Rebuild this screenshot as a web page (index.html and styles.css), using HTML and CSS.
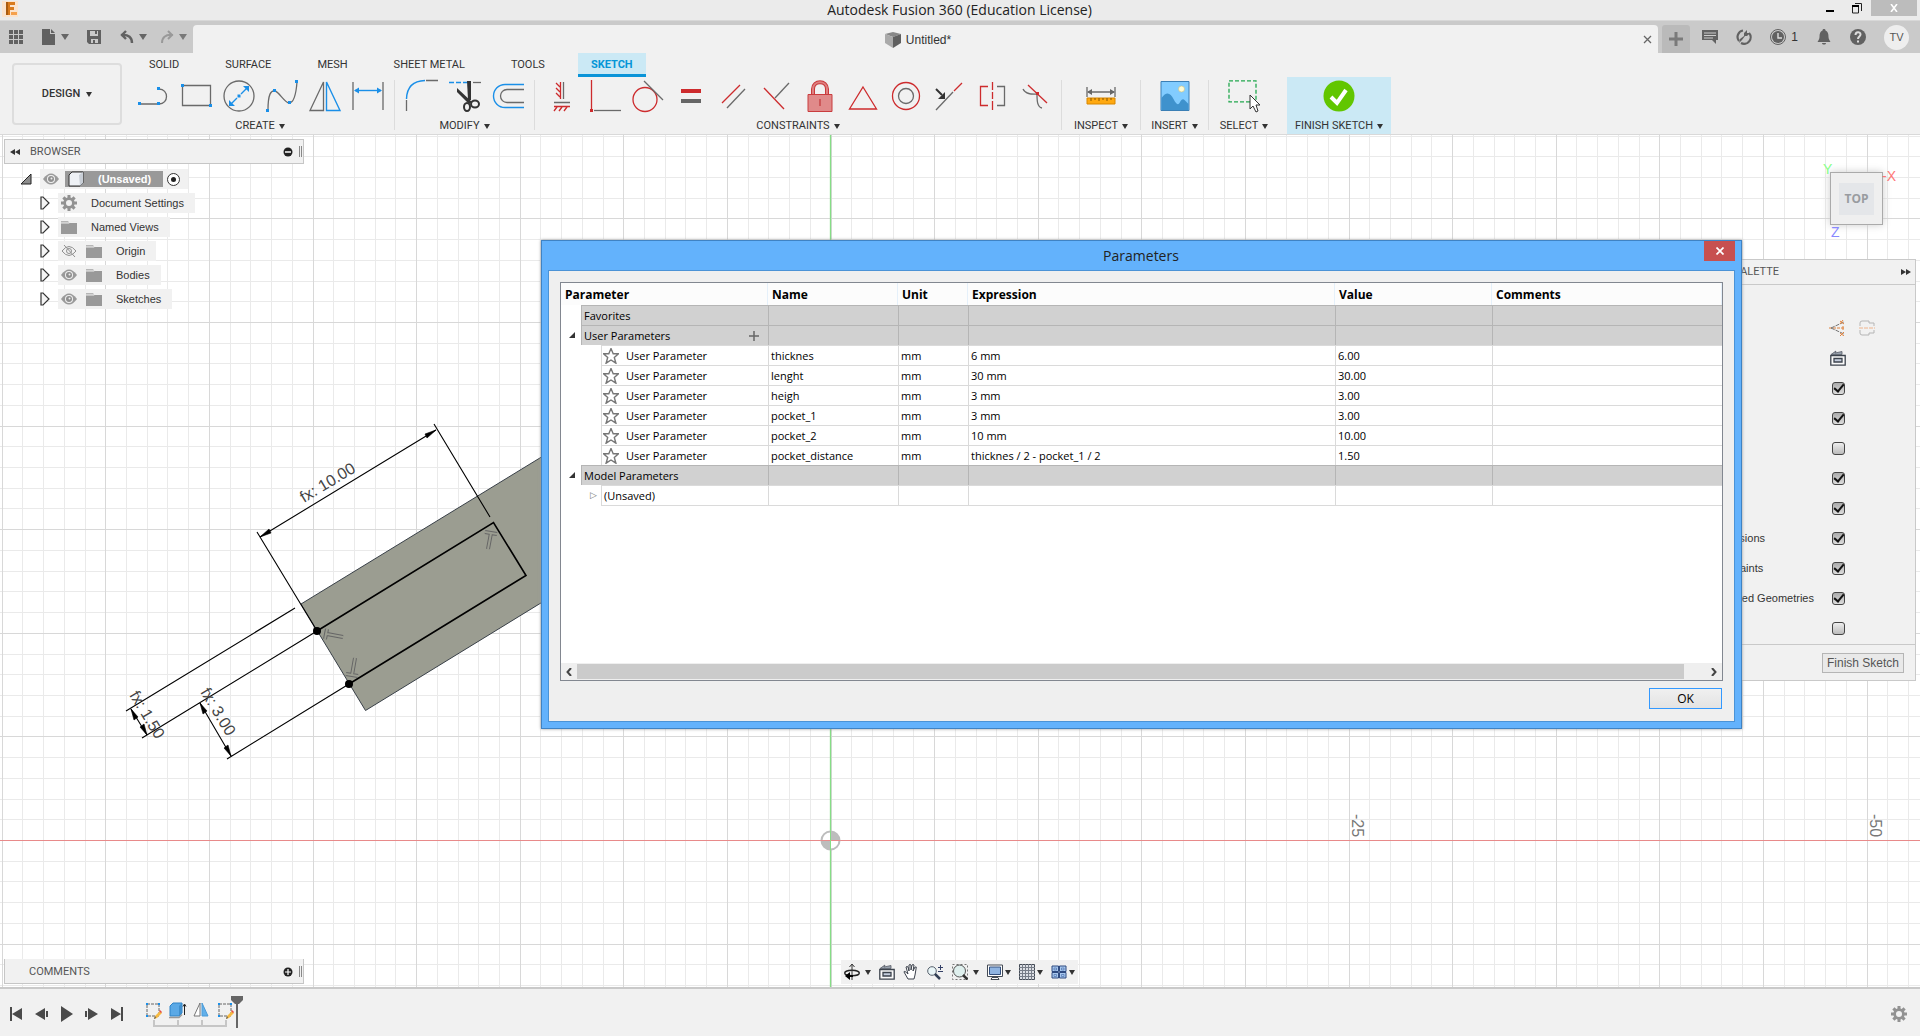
FILE: index.html
```html
<!DOCTYPE html>
<html lang="en">
<head>
<meta charset="utf-8">
<title>Autodesk Fusion 360 (Education License)</title>
<link rel="stylesheet" href="styles.css">
</head>
<body>
<svg class="defs" aria-hidden="true">
  <symbol id="eye" viewBox="0 0 16 12"><path d="M0 6Q8-5 16 6Q8 17 0 6Z" fill="#9a9a9a"/><circle cx="8" cy="6" r="4" fill="#f1f1f1"/><circle cx="8" cy="6" r="3" fill="#8f8f8f"/><circle cx="8.500" cy="5.500" r="1" fill="#eee"/></symbol>
  <symbol id="eye-off" viewBox="0 0 16 12"><path d="M1 6Q8-3 15 6Q8 15 1 6Z" fill="none" stroke="#8f8f8f"/><circle cx="8" cy="6" r="2.500" fill="none" stroke="#8f8f8f"/><path d="M3 0L14 12" stroke="#8f8f8f"/></symbol>
  <symbol id="folder" viewBox="0 0 16 14"><path d="M0 3h16v11H0z" fill="#999"/><path d="M0 1h7l1.500 2H0z" fill="#b5b5b5"/><path d="M0 3h8l2-1.500h6" fill="none" stroke="#eee"/></symbol>
  <symbol id="gear" viewBox="0 0 16 16"><path d="M6.500 0h3v2.400l1.200.5L12.500 1.300l2.200 2.200-1.700 1.800.5 1.200H16v3h-2.500l-.5 1.200 1.700 1.800-2.200 2.200-1.800-1.700-1.200.5V16h-3v-2.500l-1.200-.5-1.800 1.700-2.200-2.200L3 10.700l-.5-1.200H0v-3h2.500L3 5.300 1.300 3.500l2.200-2.200 1.800 1.600 1.200-.5zM8 5a3 3 0 1 0 0 6 3 3 0 0 0 0-6z" fill="#929292" fill-rule="evenodd"/></symbol>
  <symbol id="expand" viewBox="0 0 10 14"><path d="M1 1h2l6 6-6 6H1z" fill="#f4f4f4" stroke="#333" stroke-width="1.200"/></symbol>
  <symbol id="star" viewBox="0 0 16 16"><path d="M8 0.500l2.200 5.200h5.300l-4.200 3.800 1.600 5.700L8 12l-4.900 3.200 1.600-5.700L.5 5.700h5.300z" fill="#fff" stroke="#777" stroke-width="1.400"/></symbol>
  <symbol id="sketch" viewBox="0 0 18 18"><path d="M2 2h12v12H2z" fill="none" stroke="#666" stroke-dasharray="3 1"/><path d="M1 1h2v2H1zM13 1h2v2h-2zM1 13h2v2H1z" fill="#1a8fe8"/><path d="M9 17l1-3 5-5 2 2-5 5z" fill="#f5b942"/><path d="M14 9l1-1 2 2-1 1z" fill="#e34a4a"/><path d="M9 17l1-3 1 2z" fill="#555"/></symbol>
  <symbol id="camera" viewBox="0 0 16 16"><path d="M.8 5.500h14.400v9.700H.8z" fill="#fafafa" stroke="#3c434d" stroke-width="1.300"/><path d="M4 8.500h8v3.500H4z" fill="#c5cede" stroke="#3c434d" stroke-width="1.300"/><path d="M1 4.500L6 1 5 3l7-1.500v3z" fill="#98a1ad" stroke="#555b66" stroke-width=".8"/></symbol>
</svg>

<header class="titlebar">
  <svg class="appicon" width="16" height="16" viewBox="0 0 16 16"><path d="M0 0h16v16H0z" fill="#fbe3cd"/><path d="M4 1h9v3H8v2h4v3H8v5H4z" fill="#d97a1c"/><path d="M4 1h2v13H4z" fill="#a85b12"/><path d="M9 11h6v3H9z" fill="#f5a14d"/></svg>
  <h1>Autodesk Fusion 360 (Education License)</h1>
  <div class="winbuttons">
    <button aria-label="Minimize"><svg width="10" height="14" viewBox="0 0 10 14"><path d="M1 9h8v2H1z"/></svg></button>
    <button aria-label="Restore"><svg width="12" height="12" viewBox="0 0 12 12"><path d="M1.500 4h6v7h-6zM4 1.500h6.500V9" fill="none" stroke="#222"/><path d="M1 3h7v2H1z"/></svg></button>
    <button class="winclose" aria-label="Close"><svg width="8" height="8" viewBox="0 0 8 8"><path d="M1 0l6 8M7 0L1 8" stroke="#fff" stroke-width="1.600"/></svg></button>
  </div>
</header>

<div class="tabbar">
  <div class="quick">
    <button aria-label="Data panel"><svg width="14" height="14" viewBox="0 0 14 14"><path d="M0 0h4v4H0zM5 0h4v4H5zM10 0h4v4h-4zM0 5h4v4H0zM5 5h4v4H5zM10 5h4v4h-4zM0 10h4v4H0zM5 10h4v4H5zM10 10h4v4h-4z"/></svg></button>
    <button class="q-file" aria-label="File"><svg width="14" height="16" viewBox="0 0 14 16"><path d="M0 0h8v5h5v11H0zM9 0l4 4H9z"/></svg><i class="caret"></i></button>
    <button class="q-save" aria-label="Save"><svg width="14" height="14" viewBox="0 0 14 14"><path d="M0 0h14v14H2l-2-2zM3 1v5h8V1zm1 8v4h2v-3h2v3h3V9z" fill-rule="evenodd"/><path d="M8 1h2v3H8z"/></svg></button>
    <button class="q-undo" aria-label="Undo"><svg width="14" height="14" viewBox="0 0 14 14"><path d="M6 1L2 5l4 4M1 5c8-1 11 3 11 8" fill="none" stroke="#616161" stroke-width="2.400"/></svg><i class="caret"></i></button>
    <button class="q-redo" aria-label="Redo"><svg width="14" height="14" viewBox="0 0 14 14"><path d="M8 1l4 4-4 4M13 5C5 4 2 8 2 13" fill="none" stroke="#8e8e8e" stroke-width="2"/></svg><i class="caret"></i></button>
  </div>
  <div class="doctab">
    <div class="docname"><svg width="16" height="16" viewBox="0 0 16 16"><path d="M0 2l8-2 8 2-8 3z" fill="#888"/><path d="M0 2l8 3v11l-8-5z" fill="#aaa"/><path d="M8 5l8-3v9l-8 5z" fill="#5f5f5f"/></svg><span>Untitled*</span></div>
    <button aria-label="Close tab"><svg width="9" height="9" viewBox="0 0 9 9"><path d="M1 1l7 7M8 1L1 8" stroke="#666" stroke-width="1.300"/></svg></button>
  </div>
  <button class="newtab" aria-label="New tab"><svg width="14" height="14" viewBox="0 0 14 14"><path d="M5.500 0h3v5.500H14v3H8.500V14h-3V8.500H0v-3h5.500z" fill="#7a7a7a"/></svg></button>
  <div class="account">
    <button aria-label="Comments"><svg width="16" height="16" viewBox="0 0 16 16"><path d="M0 1h16v10h-2v4l-4-4H0z"/><path d="M2 4h12M2 6.500h12M2 9h9" stroke="#ccc"/></svg></button>
    <button aria-label="Extensions"><svg width="16" height="16" viewBox="0 0 16 16"><path d="M7 1.500a6.500 6.500 0 0 0-4 10.500M13 4a6.500 6.500 0 0 1-8 10" fill="none" stroke="#616161" stroke-width="2.200"/><path d="M3 14l1-4 4-3V4l3-3v3h3l-3 3H9l-3 4z"/></svg></button>
    <button class="jobs" aria-label="Job status"><svg width="16" height="16" viewBox="0 0 16 16"><circle cx="8" cy="8" r="7.500" fill="none" stroke="#616161"/><circle cx="8" cy="8" r="6"/><path d="M8 4v5h4" stroke="#ddd" stroke-width="1.400" fill="none"/></svg><span>1</span></button>
    <button aria-label="Notifications"><svg width="16" height="16" viewBox="0 0 16 16"><path d="M8 0c1 0 1.500.5 1.500 1.500C12 2.500 12.500 5 12.500 8c0 2 1 3 2 5h-13c1-2 2-3 2-5 0-3 .5-5.500 3-6.500C6.500.5 7 0 8 0zM6 14h4c0 2-4 2-4 0z"/></svg></button>
    <button aria-label="Help"><svg width="16" height="16" viewBox="0 0 16 16"><circle cx="8" cy="8" r="8"/><path d="M5.500 6c0-3.500 5-3.500 5-.5C10.500 7.500 8 7.500 8 10M8 11.500v2" fill="none" stroke="#ddd" stroke-width="2"/></svg></button>
    <button class="avatar">TV</button>
  </div>
</div>

<div class="toolbar">
  <button class="design">DESIGN<i class="caret"></i></button>
  <div class="ribbon">
    <nav class="tabs">
      <a href="#">SOLID</a><a href="#">SURFACE</a><a href="#">MESH</a><a href="#">SHEET METAL</a><a href="#">TOOLS</a><a href="#" class="active">SKETCH</a>
    </nav>
    <div class="groups">
      <section class="group">
        <div class="icons">
          <button aria-label="Line"><svg viewBox="0 0 32 32"><path d="M3 24h18M22 9c10 0 10 15 0 15" class="k"/><path d="M1 22h3v3H1zM20 22h3v3h-3zM20 7h3v3h-3z" class="bf"/></svg></button>
          <button aria-label="Rectangle"><svg viewBox="0 0 32 32"><path d="M2.500 5.500h28v20h-28z" class="k"/><path d="M1 4h3v3H1zM29 24h3v3h-3z" class="bf"/></svg></button>
          <button aria-label="Circle"><svg viewBox="0 0 32 32"><circle cx="16" cy="16" r="15" class="k"/><path d="M8 24l6-6M18 14l6-6" class="b"/><path d="M6 26v-6l6 6zM26 6h-6l6 6zM14.500 14.500h3v3h-3z" class="bf"/></svg></button>
          <button aria-label="Spline"><svg viewBox="0 0 32 32"><path d="M2 30C2 14 5 10 9 11s10 12 14 12 7-8 8-21" class="k"/><path d="M0 29h3v3H0zM7 9h3v3H7zM22 21h3v3h-3zM29 0h3v3h-3z" class="bf"/></svg></button>
          <button aria-label="Mirror"><svg viewBox="0 0 32 32"><path d="M14.500 2v28.500H1z" class="k"/><path d="M17.500 2v28.500H31z" class="b"/></svg></button>
          <button aria-label="Sketch dimension"><svg viewBox="0 0 32 32"><path d="M1 2v28M31 2v28" class="k"/><path d="M3 10.500h26" class="b"/><path d="M2 10.500l5-3v6zM30 10.500l-5-3v6z" class="bf"/></svg></button>
        </div>
        <button class="label">CREATE<i class="caret"></i></button>
      </section>
      <section class="group">
        <div class="icons">
          <button aria-label="Fillet"><svg viewBox="0 0 32 32"><path d="M.5 31V20M20 .5h12" class="k"/><path d="M.5 19Q1 1 19 .5" class="b"/></svg></button>
          <button aria-label="Trim"><svg viewBox="0 0 32 32"><path d="M0 2.500h20" class="b" stroke-dasharray="5 2"/><path d="M24 2.500h8" class="k"/><path d="M18 1l4 0v19h-3z" fill="#333"/><path d="M8 8l15 14-3 2L8 12z" fill="#333"/><ellipse cx="18" cy="27" rx="3" ry="4" fill="none" stroke="#333" stroke-width="2"/><ellipse cx="26" cy="24" rx="4" ry="3.500" fill="none" stroke="#333" stroke-width="2"/></svg></button>
          <button aria-label="Offset"><svg viewBox="0 0 32 32"><path d="M32 4.500H13a11.500 11.500 0 0 0 0 23h19" class="b"/><path d="M32 9.500H15a6.500 6.500 0 0 0 0 13h17" class="k"/></svg></button>
        </div>
        <button class="label">MODIFY<i class="caret"></i></button>
      </section>
      <section class="group">
        <div class="icons">
          <button aria-label="Horizontal/Vertical"><svg viewBox="0 0 32 32"><path d="M14.500 2v17M10 3l4 4M10 8l4 4M10 13l4 4M8 26.500h16M11 27l-3 4M16 27l-3 4M21 27l-3 4" class="r"/><path d="M17.500 2v17M8 22.500h16" class="k"/></svg></button>
          <button aria-label="Coincident"><svg viewBox="0 0 32 32"><path d="M2.500 0v29" class="r"/><path d="M5 30.500h27" class="k"/><path d="M1 29h3v3H1z" class="rf"/></svg></button>
          <button aria-label="Tangent"><svg viewBox="0 0 32 32"><circle cx="13" cy="19.500" r="12" class="r"/><path d="M12 1l19 19" class="k"/></svg></button>
          <button aria-label="Equal"><svg viewBox="0 0 32 32"><path d="M6 9h20v4H6z" class="rf"/><path d="M6 19h20v4H6z" fill="#666"/></svg></button>
          <button aria-label="Parallel"><svg viewBox="0 0 32 32"><path d="M4 23L22 5" class="r"/><path d="M9 28L27 9" class="k"/></svg></button>
          <button aria-label="Perpendicular"><svg viewBox="0 0 32 32"><path d="M3 8l20 21" class="r"/><path d="M14 18L28 3" class="k"/></svg></button>
          <button aria-label="Fix"><svg viewBox="0 0 32 32"><path d="M9 14V9c0-9 14-9 14 0v5" fill="none" stroke="#c8393b" stroke-width="4"/><path d="M9 14V9c0-9 14-9 14 0v5" fill="none" stroke="#df8080" stroke-width="2"/><path d="M4 14.500h24v17H4z" fill="#e08a8a" stroke="#c93c3e"/><path d="M16 19v7" stroke="#bb2528"/></svg></button>
          <button aria-label="Equal size"><svg viewBox="0 0 32 32"><path d="M16 7l13.500 22h-27z" class="r"/></svg></button>
          <button aria-label="Concentric"><svg viewBox="0 0 32 32"><circle cx="16" cy="16" r="13.500" class="r"/><circle cx="16" cy="16" r="7.500" class="k"/></svg></button>
          <button aria-label="Midpoint"><svg viewBox="0 0 32 32"><path d="M3 30l17-18" class="k"/><path d="M21 11L29 3" class="r"/><path d="M3 9l6 6" stroke="#333" stroke-width="2"/><path d="M12 12v7H5z" fill="#333"/></svg></button>
          <button aria-label="Symmetry"><svg viewBox="0 0 32 32"><path d="M12 6.500H4.500v19H12M16.500 2v28" class="r"/><path d="M21 6.500h7.500v19H21" class="k"/><path d="M15 10h3v2h-3zM15 19h3v2h-3z" fill="#f1f1f1"/></svg></button>
          <button aria-label="Curvature"><svg viewBox="0 0 32 32"><path d="M9 5l19 18" class="r"/><path d="M4 9c3 6 10 5 14 5 0 6 0 13 5 14" class="k"/><path d="M17 12h3v3h-3z" class="rf"/></svg></button>
        </div>
        <button class="label">CONSTRAINTS<i class="caret"></i></button>
      </section>
      <section class="group g-inspect">
        <div class="icons"><button aria-label="Measure"><svg viewBox="0 0 32 32"><path d="M2 7v10M30 7v10M3 12h26" class="k"/><path d="M2 12l5-3v6zM30 12l-5-3v6z" fill="#666"/><path d="M2 18h28v6H2z" fill="#ffa910" stroke="#d88700"/><path d="M6 18v3M10 18v2M14 18v3M18 18v2M22 18v3M26 18v2" stroke="#865400"/></svg></button></div>
        <button class="label">INSPECT<i class="caret"></i></button>
      </section>
      <section class="group g-insert">
        <div class="icons"><button aria-label="Insert image"><svg viewBox="0 0 32 32"><path d="M2 1.500h28v29H2z" fill="#82ccff" stroke="#3b7fb5"/><circle cx="22.500" cy="9" r="3" fill="#fdfbd5" stroke="#cdbf7a" stroke-width=".6"/><path d="M2.500 18c5-7 9-5 12 1s5 6 6 4 3-5 5-3l4 4v6h-27z" fill="#3f92cd"/></svg></button></div>
        <button class="label">INSERT<i class="caret"></i></button>
      </section>
      <section class="group g-select">
        <div class="icons"><button aria-label="Select"><svg viewBox="0 0 32 32"><path d="M1 .8h27v21H1z" fill="none" stroke="#23a84f" stroke-width="1.300" stroke-dasharray="4 2"/><path d="M22 15v14l3-3 3 6 2-1-2-6h4z" fill="#fff" stroke="#333"/></svg></button></div>
        <button class="label">SELECT<i class="caret"></i></button>
      </section>
      <section class="group finish">
        <div class="icons"><button aria-label="Finish sketch"><svg viewBox="0 0 32 32"><circle cx="16" cy="16" r="15.500" fill="#61c600"/><path d="M8 17l6 6 9-13" fill="none" stroke="#fff" stroke-width="4"/></svg></button></div>
        <button class="label">FINISH SKETCH<i class="caret"></i></button>
      </section>
    </div>
  </div>
</div>

<main class="canvas">
  <svg class="scene">
    <path id="minor" fill="none" stroke="#eaeaea"/>
    <path id="major" fill="none" stroke="#d8d8d8"/>
    <path d="M0 705.500h4000" stroke="#e88a8a"/>
    <path d="M830.500 0v2000" stroke="#86dd86" stroke-width="1.300"/>
    <g transform="translate(830.500 705.500)"><circle r="9" fill="#fff" stroke="#bdbdbd" stroke-width="2"/><path d="M0 0V-9A9 9 0 0 1 9 0zM0 0V9A9 9 0 0 1-9 0z" fill="#bdbdbd"/><path d="M-10 0h20" stroke="#e88a8a"/><path d="M0-10v20" stroke="#86dd86"/></g>
    <g class="ruler"><text transform="translate(1352 679) rotate(90)">-25</text><text transform="translate(1870 679) rotate(90)">-50</text></g>
    <g transform="translate(0 -135)">
      <path class="body" d="M301 604L620 409V554.500L365.500 710.500z"/>
      <path d="M317 631L493.500 522.500 526 575.500 349 684" fill="none" stroke="#000" stroke-width="1.600"/>
      <circle cx="317" cy="631" r="4"/><circle cx="349" cy="684" r="4"/>
      <path class="dim" d="M260 537L436 430M257 532L317 631M434 424L490 517M295 608L126 711M317 631L142 738M349 684L227 759M131 709L147 735M200 703L231 756"/>
      <path d="M260 537l9-8 2 4zM436 430l-9 8-2-4zM131 709l7 8-4 3zM147 735l-7-8 4-3zM200 703l7 8-4 3zM231 756l-7-8 4-3z" stroke="#000" stroke-width=".6"/>
      <path class="glyph-out" d="M485 532l12 2M491 533l-3 16M327 629l-2 10M327 634l16 3M346 674l12 2M355 658l-3 17"/>
      <path class="glyph-in" d="M485 532l12 2M491 533l-3 16M327 629l-2 10M327 634l16 3M346 674l12 2M355 658l-3 17"/>
      <g class="dimtext"><text transform="translate(304 503) rotate(-31)">fx: 10.00</text><text transform="translate(129 695) rotate(59)">fx: 1.50</text><text transform="translate(200 692) rotate(59)">fx: 3.00</text></g>
    </g>
  </svg>

  <aside class="browser">
    <div class="panelhead"><svg width="10" height="6" viewBox="0 0 10 6"><path d="M5 0v6L0 3zM10 0v6L5 3z" fill="#333"/></svg><span>BROWSER</span><svg class="dot" width="10" height="10" viewBox="0 0 10 10"><circle cx="5" cy="5" r="4.500" fill="#222"/><path d="M2 5h6" stroke="#fff" stroke-width="1.500"/></svg><i class="grip"></i></div>
    <ul class="tree">
      <li class="root"><svg width="12" height="12" viewBox="0 0 12 12"><path d="M11 1v10H1z" fill="#8d8d8d" stroke="#222"/></svg><div class="node"><svg width="16" height="12"><use href="#eye"/></svg><div class="docsel"><svg width="16" height="16" viewBox="0 0 16 16"><path d="M1 4l3-3h11v11l-3 3H1z" fill="#eef1f5" stroke="#333"/><path d="M11 4l4-3v11l-3 3z" fill="#c8ced6"/></svg><b>(Unsaved)</b></div><svg width="13" height="13" viewBox="0 0 13 13"><circle cx="6.500" cy="6.500" r="6" fill="#fff" stroke="#333"/><circle cx="6.500" cy="6.500" r="2.500" fill="#222"/></svg></div></li>
      <li><svg width="10" height="14"><use href="#expand"/></svg><div class="node"><svg width="16" height="16"><use href="#gear"/></svg><span>Document Settings</span></div></li>
      <li><svg width="10" height="14"><use href="#expand"/></svg><div class="node"><svg width="16" height="14"><use href="#folder"/></svg><span>Named Views</span></div></li>
      <li><svg width="10" height="14"><use href="#expand"/></svg><div class="node"><svg width="16" height="12"><use href="#eye-off"/></svg><svg width="16" height="14"><use href="#folder"/></svg><span>Origin</span></div></li>
      <li><svg width="10" height="14"><use href="#expand"/></svg><div class="node"><svg width="16" height="12"><use href="#eye"/></svg><svg width="16" height="14"><use href="#folder"/></svg><span>Bodies</span></div></li>
      <li><svg width="10" height="14"><use href="#expand"/></svg><div class="node"><svg width="16" height="12"><use href="#eye"/></svg><svg width="16" height="14"><use href="#folder"/></svg><span>Sketches</span></div></li>
    </ul>
  </aside>

  <div class="comments panelhead"><span>COMMENTS</span><svg class="dot" width="10" height="10" viewBox="0 0 10 10"><circle cx="5" cy="5" r="4.500" fill="#222"/><path d="M2 5h6M5 2v6" stroke="#fff" stroke-width="1.200"/></svg><i class="grip"></i></div>

  <div class="viewcube"><b class="ax-y">Y</b><b class="ax-x">-X</b><b class="ax-z">Z</b><div class="face"><span>TOP</span></div></div>

  <aside class="palette">
    <div class="palhead"><span>SKETCH PALETTE</span><svg width="10" height="6" viewBox="0 0 10 6"><path d="M0 0v6l5-3zM5 0v6l5-3z" fill="#333"/></svg></div>
    <div class="options">
      <div class="opt">Options</div>
      <div class="opt">Linetype<span class="pair"><svg width="16" height="16" viewBox="0 0 16 16"><path d="M0 8h16" stroke="#e0823c" stroke-dasharray="3 1"/><path d="M2 8l13-6M2 8l13 6" stroke="#777" stroke-dasharray="4 1"/><path d="M11 1l4 3M14 0l-3 4M11 13l4 3M15 12l-4 4M14 6v4" stroke="#e0823c"/></svg><svg width="16" height="16" viewBox="0 0 16 16"><path d="M1 6V3q0-2 2-2h7v2h5v3M1 10v3q0 2 2 2h7v-2h5v-3" fill="none" stroke="#b5b5b5"/><path d="M0 8h16" stroke="#efb48c" stroke-dasharray="4 1"/></svg></span></div>
      <div class="opt">Look At<svg width="16" height="16"><use href="#camera"/></svg></div>
      <label class="opt">Sketch Grid<input type="checkbox" checked></label>
      <label class="opt">Snap<input type="checkbox" checked></label>
      <label class="opt">Slice<input type="checkbox"></label>
      <label class="opt">Show Profile<input type="checkbox" checked></label>
      <label class="opt">Show Points<input type="checkbox" checked></label>
      <label class="opt">Show Dimensions<input type="checkbox" checked></label>
      <label class="opt">Show Constraints<input type="checkbox" checked></label>
      <label class="opt">Show Projected Geometries<input type="checkbox" checked></label>
      <label class="opt">3D Sketch<input type="checkbox"></label>
    </div>
    <div class="palfoot"><button>Finish Sketch</button></div>
  </aside>

  <div class="navbar">
    <button aria-label="Orbit"><svg width="16" height="16" viewBox="0 0 16 16"><ellipse cx="8" cy="9" rx="7.300" ry="2.800" fill="none" stroke="#222" stroke-width="1.400"/><path d="M8 16V1M5.500 3L8 0l2.500 3" fill="none" stroke="#333"/><path d="M1 12l5-4v3h3v2H6v3z"/></svg><i class="caret"></i></button>
    <button aria-label="Look at"><svg width="16" height="16"><use href="#camera"/></svg></button>
    <button aria-label="Pan"><svg width="16" height="16" viewBox="0 0 16 16"><path d="M5 15L1 8q0-2 4 2L3 3q1-1 2 0l1 4V1q1-1 2 0v5l1-5q1-1 2 0l-1 6 2-4q2-1 1 2l-1 6-1 4z" fill="#fff" stroke="#3c424c"/></svg></button>
    <button aria-label="Zoom"><svg width="16" height="16" viewBox="0 0 16 16"><circle cx="5" cy="7" r="4.300" fill="#eaf6f8" stroke="#57606c"/><path d="M8 10l5 5" stroke="#333f55" stroke-width="2.500"/><path d="M13.500 1v5M11 3.500h5M11 7.500h5" stroke="#333f66"/></svg></button>
    <button aria-label="Zoom window"><svg width="16" height="16" viewBox="0 0 16 16"><path d="M.5.500h15v15H.5z" fill="none" stroke="#777" stroke-dasharray="2 2"/><circle cx="7.500" cy="7" r="6" fill="#dff0ee" stroke="#555"/><path d="M11 11l4.500 4.500" stroke="#333" stroke-width="2.500"/></svg><i class="caret"></i></button>
    <button aria-label="Display settings"><svg width="16" height="16" viewBox="0 0 16 16"><path d="M.5 1h15v11.500H.5z" fill="#fff" stroke="#444b55"/><path d="M2.500 3h11v7.500h-11z" fill="#8fb4e2" stroke="#34507e"/><path d="M5 13.500h6l1 2H4z" fill="#fff" stroke="#444b55"/></svg><i class="caret"></i></button>
    <button aria-label="Grid and snaps"><svg width="16" height="16" viewBox="0 0 16 16"><path d="M.5.500h15v15H.5z" fill="#dde0e6" stroke="#444b55"/><path d="M3.500 0v16M6.500 0v16M9.500 0v16M12.500 0v16M0 3.500h16M0 6.500h16M0 9.500h16M0 12.500h16" stroke="#777d88"/></svg><i class="caret"></i></button>
    <button aria-label="Viewports"><svg width="16" height="16" viewBox="0 0 16 16"><path d="M1 2h6.500v5.500H1zM8.500 2H15v5.500H8.500zM1 8.500h6.500V14H1zM8.500 8.500H15V14H8.500z" fill="#a9c8ee" stroke="#2e4a80"/><path d="M3 4h2.500v2H3zM10.500 4H13v2h-2.500zM3 10.500h2.500v2H3zM10.500 10.500H13v2h-2.500z" fill="none" stroke="#4d74b0" stroke-width=".7"/></svg><i class="caret"></i></button>
  </div>

  <section class="dialog" role="dialog" aria-labelledby="dlg">
    <header><h2 id="dlg">Parameters</h2><button aria-label="Close"><svg width="8" height="8" viewBox="0 0 8 8"><path d="M.5.500l7 7M7.500.500l-7 7" stroke="#fff" stroke-width="1.700"/></svg></button></header>
    <div class="client">
      <div class="tablebox">
        <table>
          <colgroup><col class="c1"><col class="c2"><col class="c3"><col class="c4"><col class="c5"><col></colgroup>
          <thead><tr><th>Parameter</th><th>Name</th><th>Unit</th><th>Expression</th><th>Value</th><th>Comments</th></tr></thead>
          <tbody>
            <tr class="sec"><td><div>Favorites</div></td><td></td><td></td><td></td><td></td><td></td></tr>
            <tr class="sec"><td class="open"><div>User Parameters<button aria-label="Add parameter"><svg width="10" height="10" viewBox="0 0 10 10"><path d="M5 0v10M0 5h10" stroke="#666" stroke-width="1.500"/></svg></button></div></td><td></td><td></td><td></td><td></td><td></td></tr>
            <tr><td><div><svg width="16" height="16"><use href="#star"/></svg>User Parameter</div></td><td>thicknes</td><td>mm</td><td>6 mm</td><td>6.00</td><td></td></tr>
            <tr><td><div><svg width="16" height="16"><use href="#star"/></svg>User Parameter</div></td><td>lenght</td><td>mm</td><td>30 mm</td><td>30.00</td><td></td></tr>
            <tr><td><div><svg width="16" height="16"><use href="#star"/></svg>User Parameter</div></td><td>heigh</td><td>mm</td><td>3 mm</td><td>3.00</td><td></td></tr>
            <tr><td><div><svg width="16" height="16"><use href="#star"/></svg>User Parameter</div></td><td>pocket_1</td><td>mm</td><td>3 mm</td><td>3.00</td><td></td></tr>
            <tr><td><div><svg width="16" height="16"><use href="#star"/></svg>User Parameter</div></td><td>pocket_2</td><td>mm</td><td>10 mm</td><td>10.00</td><td></td></tr>
            <tr><td><div><svg width="16" height="16"><use href="#star"/></svg>User Parameter</div></td><td>pocket_distance</td><td>mm</td><td>thicknes / 2 - pocket_1 / 2</td><td>1.50</td><td></td></tr>
            <tr class="sec"><td class="open"><div>Model Parameters</div></td><td></td><td></td><td></td><td></td><td></td></tr>
            <tr class="last"><td class="closed"><div>(Unsaved)</div></td><td></td><td></td><td></td><td></td><td></td></tr>
          </tbody>
        </table>
        <div class="hscroll"><svg width="6" height="8" viewBox="0 0 6 8"><path d="M5 0L1.500 4 5 8" fill="none" stroke="#444" stroke-width="2"/></svg><i></i><svg width="6" height="8" viewBox="0 0 6 8"><path d="M1 0l3.500 4L1 8" fill="none" stroke="#444" stroke-width="2"/></svg></div>
      </div>
      <button class="ok">OK</button>
    </div>
  </section>
</main>

<footer class="timeline">
  <div class="play">
    <button aria-label="Go to start"><svg width="13" height="14" viewBox="0 0 13 14"><path d="M0 0h2v14H0zM12 1v12L2 7z"/></svg></button>
    <button aria-label="Step back"><svg width="13" height="14" viewBox="0 0 13 14"><path d="M10 1v12L0 7zM11 4h2v6h-2z"/></svg></button>
    <button aria-label="Play"><svg width="13" height="16" viewBox="0 0 13 16"><path d="M1 0l12 8-12 8z"/></svg></button>
    <button aria-label="Step forward"><svg width="13" height="14" viewBox="0 0 13 14"><path d="M3 1v12l10-6zM0 4h2v6H0z"/></svg></button>
    <button aria-label="Go to end"><svg width="13" height="14" viewBox="0 0 13 14"><path d="M11 0h2v14h-2zM1 1v12l10-6z"/></svg></button>
  </div>
  <svg class="history" width="100" height="36" viewBox="0 0 100 36">
    <use href="#sketch" width="18" height="18" y="8"/>
    <path d="M25 12l3-3h9v10l-3 3h-9z" fill="#5ba9e6" stroke="#2e83c7"/><path d="M34 12l3-3v10l-3 3z" fill="#3f8fce"/><path d="M24 23.500h10l3-3" fill="none" stroke="#999" stroke-width="1.500"/><path d="M39.500 21V11M38 12.500l1.500-2.500 1.500 2.500" fill="none" stroke="#222"/>
    <path d="M55 9v13h-6z" fill="#fff" stroke="#777"/><path d="M57 9v13h6z" fill="#62b0ea" stroke="#4a9bd8"/>
    <use href="#sketch" width="18" height="18" x="72" y="8"/>
    <path d="M9 26v6h72v-6M33 26v6M57 26v6" fill="none" stroke="#c6c6c6" stroke-width="2"/>
    <path d="M86 2h12v4l-4 4h-1v24h-2V10h-1l-4-4z" fill="#666"/>
  </svg>
  <button class="settings" aria-label="Settings"><svg width="16" height="16"><use href="#gear"/></svg></button>
</footer>
<script src="grid.js"></script>
</body>
</html>
```
FILE: styles.css
```css
* { box-sizing: border-box; }
body { margin: 0; height: 100vh; display: flex; flex-direction: column; overflow: hidden; font: 11px/16px "Liberation Sans", Arial, sans-serif; color: #333; background: #f1f1f1; }
button { margin: 0; padding: 0; border: 0; background: none; font: inherit; color: inherit; display: flex; align-items: center; }
svg { display: block; flex: none; }
h1, h2 { margin: 0; font-weight: 400; font-family: "Open Sans", "Noto Sans", sans-serif; color: #222; }
.defs { position: absolute; width: 0; height: 0; }
.caret { flex: none; border: 3px solid transparent; border-top: 5px solid #333; border-bottom: 0; }

.titlebar { height: 20px; flex: none; background: #ebebeb; display: flex; align-items: flex-start; padding: 0 3px 0 2px; }
.appicon { margin-top: 1px; }
.titlebar h1 { flex: 1; text-align: center; font-size: 14px; line-height: 20px; padding-left: 76px; }
.winbuttons { display: flex; gap: 16px; width: 92px; height: 16px; align-items: center; justify-content: flex-end; }
.winclose { width: 46px; height: 16px; background: #bcbcbc; justify-content: center; }
.winbuttons button:nth-child(2) { margin-right: -8px; }

.tabbar { height: 33px; flex: none; background: #cacaca; border-top: 1px solid #d8d8d8; padding-top: 4px; display: flex; }
.quick { width: 193px; padding: 0 0 4px 9px; display: flex; align-items: center; }
.quick svg, .account svg { fill: #616161; }
.quick .caret { border-width: 4px; border-bottom: 0; border-top: 6px solid #666; margin-left: 5px; }
.q-file { margin-left: 19px; }
.q-save { margin-left: 18px; }
.q-undo { margin-left: 19px; }
.q-redo { margin-left: 13px; opacity: .8; }
.doctab { flex: 1; display: flex; align-items: center; background: #f1f1f1; border-radius: 4px 4px 0 0; padding-right: 6px; }
.docname { flex: 1; display: flex; justify-content: center; align-items: center; gap: 5px; font-size: 12px; padding-top: 1px; }
.newtab { width: 28px; margin-left: 4px; justify-content: center; background: #bababa; border-radius: 3px 3px 0 0; }
.account { width: 230px; padding: 0 11px 4px 12px; display: flex; align-items: center; justify-content: space-between; }
.jobs { gap: 5px; font-size: 12px; }
.avatar { width: 25px; height: 25px; border-radius: 50%; background: #eee; justify-content: center; font-size: 11px; color: #555; }

.toolbar { height: 82px; flex: none; display: flex; border-bottom: 1px solid #d9d9d9; padding-left: 12px; font-family: Roboto, "Liberation Sans", sans-serif; }
.design { width: 110px; height: 62px; margin-top: 10px; border: 2px solid #ddd; border-radius: 4px; justify-content: center; gap: 6px; font-weight: 500; }
.ribbon { flex: 1; padding-left: 9px; }
.tabs { display: flex; gap: 20px; padding-left: 5px; height: 24px; }
.tabs a { padding: 4px 13px; color: #333; text-decoration: none; }
.tabs a.active { background: #cbe9f5; color: #0696d7; font-weight: 700; padding-bottom: 1px; border-bottom: 3px solid #0a94d8; }
.groups { display: flex; height: 57px; }
.group { display: flex; flex-direction: column; align-items: center; position: relative; padding: 0 6px 0 5px; }
.group:first-child { padding-left: 0; }
.group::after { content: ""; position: absolute; right: 0; top: 3px; width: 1px; height: 50px; background: #dcdcdc; }
.icons { display: flex; height: 41px; padding-top: 3px; }
.icons button { width: 43px; height: 32px; justify-content: center; }
.icons svg { width: 32px; height: 32px; overflow: visible; }
.label { gap: 4px; height: 16px; white-space: nowrap; }
.k { fill: none; stroke: #6a6a6a; stroke-width: 1.3; }
.b { fill: none; stroke: #1a8fe8; stroke-width: 1.4; }
.r { fill: none; stroke: #cd2b2d; stroke-width: 1.3; }
.bf { fill: #1a8fe8; }
.rf { fill: #cd2b2d; }
.g-inspect { width: 79px; }
.g-insert { width: 68px; }
.g-select { width: 78px; padding: 0 8px 0 0; }
.g-select::after, .finish::after { display: none; }
.finish { width: 104px; background: #cbe9f5; padding: 0; }

.canvas { flex: 1; position: relative; background: #fff; overflow: hidden; }
.scene { position: absolute; inset: 0; width: 100%; height: 100%; }
.ruler text { font-size: 16px; fill: #777; }
.body { fill: #9b9d91; stroke: #394048; }
.dim { fill: none; stroke: #000; stroke-width: 1.1; }
.dimtext text { font-size: 16px; fill: #444; }
.glyph-out { fill: none; stroke: #666; stroke-width: 4; }
.glyph-in { fill: none; stroke: #9b9d91; stroke-width: 2; }

.panelhead { width: 300px; height: 25px; display: flex; align-items: center; background: #f1f1f1; border: 1px solid #c6c6c6; padding: 0 1px 0 5px; gap: 10px; font: 11px/16px Roboto, "Liberation Sans", sans-serif; color: #555; }
.panelhead .dot { margin-left: auto; }
.grip { width: 3px; height: 11px; border: 1px solid #888; border-width: 0 1px; margin-left: -4px; }
.browser { position: absolute; left: 4px; top: 4px; }
.comments { position: absolute; left: 4px; bottom: 3px; border-top: 0; padding-top: 1px; padding-left: 24px; }
.tree { list-style: none; margin: 5px 0 0; padding: 0; display: flex; flex-direction: column; gap: 4px; }
.tree li { display: flex; align-items: center; gap: 8px; height: 20px; padding-left: 36px; }
.tree .root { padding-left: 16px; }
.node { display: flex; align-items: center; gap: 9px; height: 20px; background: #f1f1f1; padding: 0 11px 0 3px; }
.node span { padding-left: 5px; }
.root .node { padding: 0 8px 0 3px; gap: 6px; }
.root .node > svg:last-child { margin-left: -2px; }
.docsel { display: flex; align-items: center; gap: 14px; height: 16px; width: 98px; padding-left: 3px; background: #999; color: #fff; }

.viewcube { position: absolute; right: 37px; top: 37px; width: 53px; height: 53px; }
.face { height: 53px; border: 1px solid #aaa; background: #efefef; display: flex; align-items: center; justify-content: center; box-shadow: 0 0 8px #ccc; }
.face span { background: #e4e6e9; padding: 8px 5px; font: 700 12px/16px "Open Sans", sans-serif; color: #999ca0; }
.viewcube b { position: absolute; font: 14px/16px "Liberation Sans", sans-serif; }
.ax-y { left: -7px; top: -11px; color: #8f8; }
.ax-x { right: -13px; top: -4px; color: #f77; }
.ax-z { left: 1px; top: 52px; color: #88f; }

.palette { position: absolute; right: 4px; top: 124px; width: 252px; background: #f1f1f1; border: 1px solid #c9c9c9; }
.palhead { height: 25px; display: flex; align-items: center; justify-content: space-between; padding: 0 4px 0 25px; border-bottom: 1px solid #c9c9c9; font-family: Roboto, sans-serif; color: #555; }
.options { padding: 0 0 1px 12px; }
.opt { display: flex; align-items: center; justify-content: space-between; height: 30px; padding-right: 70px; }
.opt:first-child { height: 28px; }
.opt svg { margin-right: -1px; }
.pair { display: flex; gap: 14px; margin-right: -30px; }
.pair svg { margin: 0; }
.opt input { appearance: none; margin: 0; width: 13px; height: 13px; border: 1px solid #444; border-radius: 3px; background: linear-gradient(#eee, #bbb); }
.opt input:checked { background: linear-gradient(#aaa, #ddd); display: grid; place-items: center; }
.opt input:checked::before { content: ""; width: 4px; height: 8px; border: solid #111; border-width: 0 2px 2px 0; transform: rotate(40deg); margin-top: -2px; }
.palfoot { height: 36px; display: flex; align-items: center; justify-content: flex-end; border-top: 1px solid #c9c9c9; padding-right: 11px; }
.palfoot button { width: 82px; height: 20px; border: 1px solid #b5b5b5; background: #e9e9e9; justify-content: center; font-size: 12px; color: #555; }

.navbar { position: absolute; left: 841px; bottom: 3px; width: 237px; height: 24px; background: #f1f1f1; display: flex; align-items: center; justify-content: space-between; padding: 0 3px; }
.navbar button { gap: 5px; }
.navbar button:nth-child(n+6) { gap: 2px; }

.dialog { position: absolute; left: 541px; top: 105px; width: 1201px; background: #63b2fc; border: 1px solid #3f83c4; padding: 0 6px 6px; box-shadow: 0 0 3px #999; font: 11px/16px "Open Sans", "Noto Sans", sans-serif; color: #000; }
.dialog header { height: 29px; display: flex; align-items: flex-start; }
.dialog h2 { flex: 1; text-align: center; font-size: 14px; line-height: 30px; padding-left: 30px; }
.dialog header button { width: 31px; height: 20px; background: #c75050; justify-content: center; }
.client { background: #efefef; border: 1px solid #4b93d6; padding: 11px 11px 12px; display: flex; flex-direction: column; align-items: flex-end; gap: 7px; }
.tablebox { width: 100%; height: 399px; border: 1px solid #828790; background: #fff; display: flex; flex-direction: column; justify-content: space-between; }
table { width: 100%; table-layout: fixed; border-collapse: separate; border-spacing: 0; }
.c1 { width: 207px; }
.c2 { width: 130px; }
.c3 { width: 70px; }
.c4 { width: 367px; }
.c5 { width: 157px; }
th { height: 22px; padding: 2px 4px 0; text-align: left; font-size: 12px; line-height: 16px; font-weight: 700; background: #fcfcfc; border-right: 1px solid #e5f0fa; }
td { height: 20px; padding: 0 0 0 2px; line-height: 18px; border-top: 1px solid #dadada; border-left: 1px solid #dadada; white-space: nowrap; }
td:first-child { border: 0; padding: 0 0 0 40px; }
td:first-child div { height: 20px; border-top: 1px solid #dadada; border-left: 1px solid #dadada; padding-left: 1px; display: flex; align-items: center; gap: 7px; }
.sec td:not(:first-child) { background: #d1d1d1; border-color: #b5b5b5; }
.sec td:first-child { padding-left: 20px; }
.sec td:first-child div { background: #d1d1d1; border-color: #b5b5b5; padding: 0 9px 0 2px; justify-content: space-between; }
.open, .closed { position: relative; }
.open::before { content: ""; position: absolute; left: 8px; top: 7px; border: 3px solid #333; border-left-color: transparent; border-top-color: transparent; }
.closed::before { content: "▷"; position: absolute; left: 29px; font: 9px/21px "DejaVu Sans", sans-serif; color: #777; }
.last td { height: 21px; border-bottom: 1px solid #dadada; }
.last td:first-child { border: 0; }
.last td:first-child div { height: 21px; border-bottom: 1px solid #dadada; padding-left: 2px; }
.hscroll { height: 17px; display: flex; align-items: center; gap: 5px; background: #efefef; padding: 0 5px; }
.hscroll i { flex: 1; height: 15px; background: #cbcbcb; margin-right: 22px; }
.ok { width: 73px; height: 21px; margin-right: 1px; border: 1px solid #3399ff; background: linear-gradient(#f0f0f0, #e3e3e3); justify-content: center; font-size: 12px; }

.timeline { height: 49px; flex: none; border-top: 2px solid #c9c9c9; display: flex; align-items: center; padding: 2px 13px 0 10px; }
.play { display: flex; gap: 12px; width: 135px; fill: #4a4a4a; }
.history { margin-bottom: 3px; }
.settings { margin-left: auto; }
```
FILE: grid.js
```js
// Draws the sketch grid: minor lines every unit, a major line every five.
const origin = { x: 830.5, y: 705 };
const step = 20.72;
const scene = document.querySelector('.scene');

function drawGrid() {
  const { width, height } = scene.getBoundingClientRect();
  const paths = { minor: '', major: '' };
  for (let i = -Math.ceil(origin.x / step); origin.x + i * step < width; i++) {
    const x = Math.round(origin.x + i * step) + 0.5;
    paths[i % 5 ? 'minor' : 'major'] += `M${x} 0V${height}`;
  }
  for (let i = -Math.ceil(origin.y / step); origin.y + i * step < height; i++) {
    const y = Math.round(origin.y + i * step) + 0.5;
    paths[i % 5 ? 'minor' : 'major'] += `M0 ${y}H${width}`;
  }
  document.getElementById('minor').setAttribute('d', paths.minor);
  document.getElementById('major').setAttribute('d', paths.major);
}

drawGrid();
window.addEventListener('resize', drawGrid);
```
